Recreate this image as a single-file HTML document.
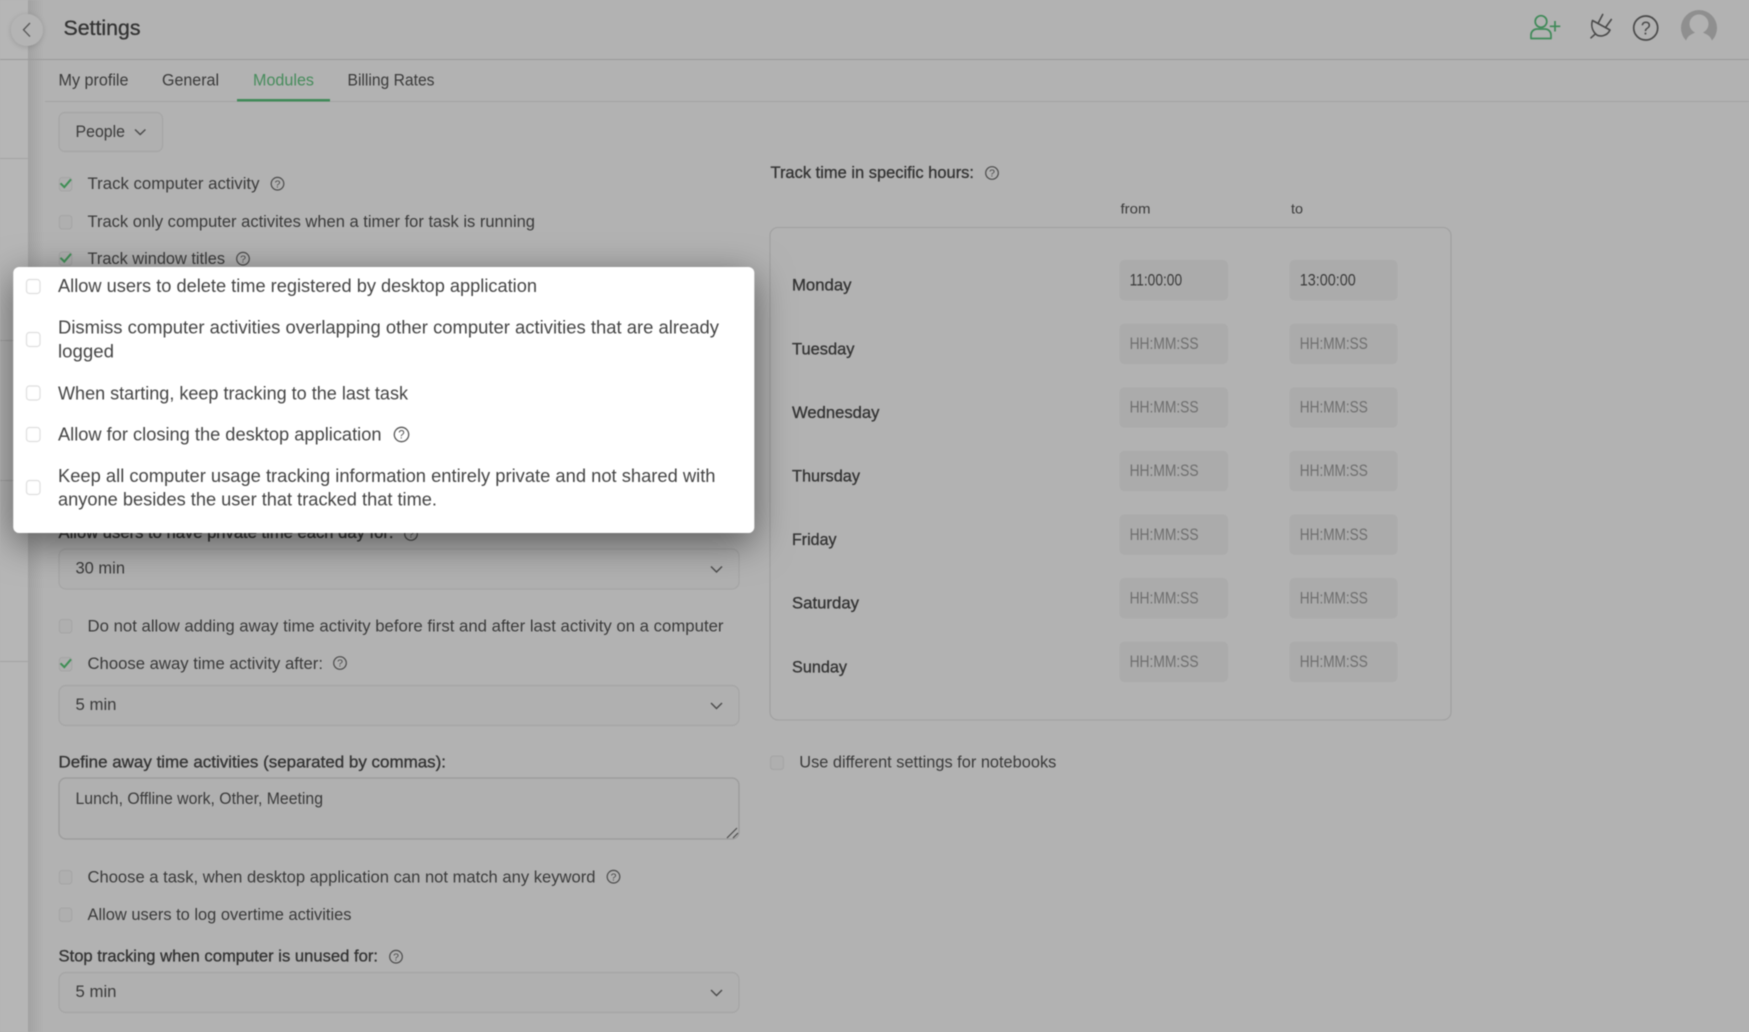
<!DOCTYPE html>
<html lang="en"><head><meta charset="utf-8"><title>Settings</title>
<style>
html,body{margin:0;padding:0;width:1749px;height:1032px;overflow:hidden;background:#b2b2b2}
svg{display:block;filter:blur(.45px)}
text{font-family:"Liberation Sans",Arial,sans-serif;font-size:16.5px;fill:#3a3a3a}
.m{stroke:#333;stroke-width:.3px;fill:#333}
.w{font-size:18px;fill:#454545}
.ph{fill:#6e6e6e;font-size:16.5px}
.cb{fill:#afafaf;stroke:#a4a4a4;stroke-width:1}
.wc{fill:#fff;stroke:#dedede;stroke-width:1.2}
.ck{fill:none;stroke:#3f8f55;stroke-width:2}
.sel{fill:#b0b0b0;stroke:#a5a5a5;stroke-width:1.2}
.inp{fill:#ababab}
.chev{fill:none;stroke:#4a4a4a;stroke-width:1.4}
.hc{fill:none;stroke:#4a4a4a;stroke-width:1.2}
.hq{font-size:10.5px;fill:#4a4a4a;text-anchor:middle}
.hqw{font-size:11.5px;fill:#555;text-anchor:middle}
</style></head>
<body>
<svg width="1749" height="1032" viewBox="0 0 1749 1032" xmlns="http://www.w3.org/2000/svg">
<defs>
<linearGradient id="sh" x1="0" x2="1" y1="0" y2="0"><stop offset="0" stop-color="#000" stop-opacity=".09"/><stop offset="1" stop-color="#000" stop-opacity="0"/></linearGradient>
<filter id="ms" x="-10%" y="-30%" width="120%" height="170%"><feDropShadow dx="0" dy="10" stdDeviation="19" flood-color="#000" flood-opacity=".5"/></filter>
<filter id="bs" x="-40%" y="-40%" width="180%" height="180%"><feDropShadow dx="0" dy="1" stdDeviation="3" flood-color="#000" flood-opacity=".16"/></filter>
</defs>
<rect width="1749" height="1032" fill="#b2b2b2"/>
<!-- left rail -->
<rect x="0" y="0" width="28" height="1032" fill="#b6b6b6"/>
<rect x="28" y="0" width="16" height="1032" fill="url(#sh)"/>
<rect x="0" y="158" width="28" height="1" fill="#a4a4a4"/>
<rect x="0" y="340" width="28" height="1" fill="#a4a4a4"/>
<rect x="0" y="480" width="28" height="1" fill="#a4a4a4"/>
<rect x="0" y="661" width="28" height="1" fill="#a4a4a4"/>
<!-- header -->
<rect x="0" y="59" width="1749" height="1" fill="#999"/>
<circle cx="27" cy="30" r="16" fill="#b4b4b4" filter="url(#bs)"/>
<path d="M30 23l-6.500 6.800 6.500 6.800" fill="none" stroke="#555" stroke-width="1.300"/>
<text x="63.500" y="35" style="font-size:21px" class="m" textLength="77" lengthAdjust="spacingAndGlyphs">Settings</text>
<!-- header icons -->
<g fill="none" stroke="#3f8a58" stroke-width="1.700">
<circle cx="1541" cy="21.500" r="5.800"/>
<path d="M1531 38.500v-3.500a6 6 0 0 1 6-6h8a6 6 0 0 1 6 6v3.500z" stroke-linejoin="round"/>
<path d="M1555 21v10.500M1549.800 26.300h10.500"/>
</g>
<g fill="none" stroke="#4a4a4a" stroke-width="1.600" stroke-linecap="round" stroke-linejoin="round">
<path d="M1592.500 20.500L1610 30C1607 36.500 1599 37.500 1595.500 33.800C1592 30 1591 25 1592.500 20.500z"/>
<path d="M1598 23.500l4.700-9M1605.500 27.500l5.800-8M1595.500 33.800l-4.500 4"/>
</g>
<circle cx="1645.700" cy="28" r="12" fill="none" stroke="#4a4a4a" stroke-width="1.700"/>
<text x="1645.700" y="34.500" text-anchor="middle" style="font-size:18px;fill:#4a4a4a" class="">?</text>
<path d="M1686 40.500a18 18 0 1 1 26 0l-1-2c-2-4-7-5-8-6a9.500 9.500 0 1 0-8 0c-1 1-6 2-8 6z" fill="#8f8f8f"/>
<!-- tabs -->
<rect x="45" y="101" width="1704" height="1" fill="#a3a3a3"/>
<rect x="237" y="99" width="93" height="2.500" fill="#3f8a58"/>
<text x="58.500" y="85.500" textLength="70" lengthAdjust="spacingAndGlyphs">My profile</text>
<text x="162" y="85.500" textLength="57" lengthAdjust="spacingAndGlyphs">General</text>
<text x="253" y="85.500" textLength="61" lengthAdjust="spacingAndGlyphs" style="fill:#478c5c">Modules</text>
<text x="347.500" y="85.500" textLength="87" lengthAdjust="spacingAndGlyphs">Billing Rates</text>
<!-- people -->
<rect x="59" y="112.500" width="103.500" height="39" rx="6" class="sel"/>
<text x="75.500" y="137" textLength="49.500" lengthAdjust="spacingAndGlyphs">People</text>
<path class="chev" d="M135 129.500l5.200 5 5.200-5"/>
<!-- left checks -->
<rect x="59.300" y="177.500" width="12.500" height="13.500" rx="3" class="cb"/><path class="ck" d="M60.500 183.300l3.800 3.800 6.700-7.800"/>
<text x="87.500" y="189" textLength="172" lengthAdjust="spacingAndGlyphs">Track computer activity</text>
<circle cx="277.500" cy="183.700" r="6.300" class="hc"/><text x="277.500" y="187.400" class="hq">?</text>
<rect x="59.300" y="215.500" width="12.500" height="13.500" rx="3" class="cb"/>
<text x="87.500" y="227" textLength="447.500" lengthAdjust="spacingAndGlyphs">Track only computer activites when a timer for task is running</text>
<rect x="59.300" y="252" width="12.500" height="13.500" rx="3" class="cb"/><path class="ck" d="M60.500 257.800l3.800 3.800 6.700-7.800"/>
<text x="87.500" y="264" textLength="137.500" lengthAdjust="spacingAndGlyphs">Track window titles</text>
<circle cx="243" cy="258.700" r="6.300" class="hc"/><text x="243" y="262.400" class="hq">?</text>
<!-- below modal (left) -->
<text x="58.500" y="538" class="m" textLength="335" lengthAdjust="spacingAndGlyphs">Allow users to have private time each day for:</text>
<circle cx="411" cy="534" r="6.300" class="hc"/><text x="411" y="537.700" class="hq">?</text>
<rect x="59" y="549" width="680" height="40" rx="7" class="sel"/>
<text x="75.500" y="573.500" textLength="49.500" lengthAdjust="spacingAndGlyphs">30 min</text>
<path class="chev" d="M711 566.500l5.500 5.500 5.500-5.500"/>
<rect x="59.300" y="619.500" width="12.500" height="13.500" rx="3" class="cb"/>
<text x="87.500" y="631.700" textLength="636" lengthAdjust="spacingAndGlyphs">Do not allow adding away time activity before first and after last activity on a computer</text>
<rect x="59.300" y="657.500" width="12.500" height="13.500" rx="3" class="cb"/><path class="ck" d="M60.500 663.300l3.800 3.800 6.700-7.800"/>
<text x="87.500" y="669" textLength="235.500" lengthAdjust="spacingAndGlyphs">Choose away time activity after:</text>
<circle cx="340" cy="663" r="6.300" class="hc"/><text x="340" y="666.700" class="hq">?</text>
<rect x="59" y="685.500" width="680" height="40" rx="7" class="sel"/>
<text x="75.500" y="710" textLength="41" lengthAdjust="spacingAndGlyphs">5 min</text>
<path class="chev" d="M711 703l5.500 5.500 5.500-5.500"/>
<text x="58.500" y="767.700" class="m" textLength="387.500" lengthAdjust="spacingAndGlyphs">Define away time activities (separated by commas):</text>
<rect x="59" y="778" width="680" height="61" rx="7" class="sel" style="stroke:#9a9a9a"/>
<text x="75.500" y="804" textLength="247.500" lengthAdjust="spacingAndGlyphs">Lunch, Offline work, Other, Meeting</text>
<path d="M727 838l10-10M733 838l5-5" fill="none" stroke="#444" stroke-width="1"/>
<rect x="59.300" y="870.500" width="12.500" height="13.500" rx="3" class="cb"/>
<text x="87.500" y="882.700" textLength="508" lengthAdjust="spacingAndGlyphs">Choose a task, when desktop application can not match any keyword</text>
<circle cx="613.500" cy="876.700" r="6.300" class="hc"/><text x="613.500" y="880.400" class="hq">?</text>
<rect x="59.300" y="908" width="12.500" height="13.500" rx="3" class="cb"/>
<text x="87.500" y="920" textLength="264" lengthAdjust="spacingAndGlyphs">Allow users to log overtime activities</text>
<text x="58.500" y="961.700" class="m" textLength="319.500" lengthAdjust="spacingAndGlyphs">Stop tracking when computer is unused for:</text>
<circle cx="396" cy="956.700" r="6.300" class="hc"/><text x="396" y="960.400" class="hq">?</text>
<rect x="59" y="972.500" width="680" height="40" rx="7" class="sel"/>
<text x="75.500" y="997" textLength="41" lengthAdjust="spacingAndGlyphs">5 min</text>
<path class="chev" d="M711 990l5.500 5.500 5.500-5.500"/>
<!-- right column -->
<text x="770.500" y="178" class="m" textLength="203.500" lengthAdjust="spacingAndGlyphs">Track time in specific hours:</text>
<circle cx="992" cy="173" r="6.300" class="hc"/><text x="992" y="176.700" class="hq">?</text>
<text x="1120.500" y="213.500" style="font-size:14px" textLength="30" lengthAdjust="spacingAndGlyphs">from</text>
<text x="1291" y="213.500" style="font-size:14px" textLength="12" lengthAdjust="spacingAndGlyphs">to</text>
<rect x="770" y="227.500" width="681" height="492.500" rx="8" fill="none" stroke="#9f9f9f" stroke-width="1.100"/>
<g>
<text x="792" y="290.700" class="m" textLength="59.500" lengthAdjust="spacingAndGlyphs">Monday</text>
<rect x="1119.500" y="260" width="108.500" height="40.500" rx="5" class="inp"/><rect x="1289.500" y="260" width="108" height="40.500" rx="5" class="inp"/>
<text x="1129.600" y="285.700" style="font-size:17px" textLength="52.500" lengthAdjust="spacingAndGlyphs">11:00:00</text>
<text x="1299.800" y="285.700" style="font-size:17px" textLength="56" lengthAdjust="spacingAndGlyphs">13:00:00</text>

<text x="792" y="354.300" class="m" textLength="62.500" lengthAdjust="spacingAndGlyphs">Tuesday</text>
<rect x="1119.500" y="323.600" width="108.500" height="40.500" rx="5" class="inp"/><rect x="1289.500" y="323.600" width="108" height="40.500" rx="5" class="inp"/>
<text x="1129.600" y="349" class="ph" textLength="69" lengthAdjust="spacingAndGlyphs">HH:MM:SS</text>
<text x="1299.800" y="349" class="ph" textLength="68" lengthAdjust="spacingAndGlyphs">HH:MM:SS</text>

<text x="792" y="417.900" class="m" textLength="87.500" lengthAdjust="spacingAndGlyphs">Wednesday</text>
<rect x="1119.500" y="387.200" width="108.500" height="40.500" rx="5" class="inp"/><rect x="1289.500" y="387.200" width="108" height="40.500" rx="5" class="inp"/>
<text x="1129.600" y="412.600" class="ph" textLength="69" lengthAdjust="spacingAndGlyphs">HH:MM:SS</text>
<text x="1299.800" y="412.600" class="ph" textLength="68" lengthAdjust="spacingAndGlyphs">HH:MM:SS</text>

<text x="792" y="481.500" class="m" textLength="68" lengthAdjust="spacingAndGlyphs">Thursday</text>
<rect x="1119.500" y="450.800" width="108.500" height="40.500" rx="5" class="inp"/><rect x="1289.500" y="450.800" width="108" height="40.500" rx="5" class="inp"/>
<text x="1129.600" y="476.200" class="ph" textLength="69" lengthAdjust="spacingAndGlyphs">HH:MM:SS</text>
<text x="1299.800" y="476.200" class="ph" textLength="68" lengthAdjust="spacingAndGlyphs">HH:MM:SS</text>

<text x="792" y="545.100" class="m" textLength="44.500" lengthAdjust="spacingAndGlyphs">Friday</text>
<rect x="1119.500" y="514.400" width="108.500" height="40.500" rx="5" class="inp"/><rect x="1289.500" y="514.400" width="108" height="40.500" rx="5" class="inp"/>
<text x="1129.600" y="539.800" class="ph" textLength="69" lengthAdjust="spacingAndGlyphs">HH:MM:SS</text>
<text x="1299.800" y="539.800" class="ph" textLength="68" lengthAdjust="spacingAndGlyphs">HH:MM:SS</text>

<text x="792" y="608.700" class="m" textLength="67" lengthAdjust="spacingAndGlyphs">Saturday</text>
<rect x="1119.500" y="578" width="108.500" height="40.500" rx="5" class="inp"/><rect x="1289.500" y="578" width="108" height="40.500" rx="5" class="inp"/>
<text x="1129.600" y="603.400" class="ph" textLength="69" lengthAdjust="spacingAndGlyphs">HH:MM:SS</text>
<text x="1299.800" y="603.400" class="ph" textLength="68" lengthAdjust="spacingAndGlyphs">HH:MM:SS</text>

<text x="792" y="672.300" class="m" textLength="55" lengthAdjust="spacingAndGlyphs">Sunday</text>
<rect x="1119.500" y="641.600" width="108.500" height="40.500" rx="5" class="inp"/><rect x="1289.500" y="641.600" width="108" height="40.500" rx="5" class="inp"/>
<text x="1129.600" y="667" class="ph" textLength="69" lengthAdjust="spacingAndGlyphs">HH:MM:SS</text>
<text x="1299.800" y="667" class="ph" textLength="68" lengthAdjust="spacingAndGlyphs">HH:MM:SS</text>
</g>
<rect x="770.500" y="756" width="13" height="13.500" rx="3" class="cb"/>
<text x="799.300" y="767.700" textLength="257" lengthAdjust="spacingAndGlyphs">Use different settings for notebooks</text>
<!-- modal -->
<rect x="13.300" y="267" width="741" height="266" rx="6" fill="#fff" filter="url(#ms)"/>
<rect x="26.500" y="279.500" width="13.500" height="14" rx="3" class="wc"/>
<text x="58" y="292" class="w" textLength="479" lengthAdjust="spacingAndGlyphs">Allow users to delete time registered by desktop application</text>
<rect x="26.500" y="332.500" width="13.500" height="14" rx="3" class="wc"/>
<text x="58" y="333.500" class="w" textLength="661" lengthAdjust="spacingAndGlyphs">Dismiss computer activities overlapping other computer activities that are already</text>
<text x="58" y="357.500" class="w" textLength="56" lengthAdjust="spacingAndGlyphs">logged</text>
<rect x="26.500" y="386" width="13.500" height="14" rx="3" class="wc"/>
<text x="58" y="399.300" class="w" textLength="350" lengthAdjust="spacingAndGlyphs">When starting, keep tracking to the last task</text>
<rect x="26.500" y="427.500" width="13.500" height="14" rx="3" class="wc"/>
<text x="58" y="440.300" class="w" textLength="323.500" lengthAdjust="spacingAndGlyphs">Allow for closing the desktop application</text>
<circle cx="401.500" cy="434.500" r="7.200" fill="none" stroke="#555" stroke-width="1.300"/><text x="401.500" y="438.600" class="hqw">?</text>
<rect x="26.500" y="480.500" width="13.500" height="14" rx="3" class="wc"/>
<text x="58" y="482" class="w" textLength="657.500" lengthAdjust="spacingAndGlyphs">Keep all computer usage tracking information entirely private and not shared with</text>
<text x="58" y="505.300" class="w" textLength="379" lengthAdjust="spacingAndGlyphs">anyone besides the user that tracked that time.</text>
</svg>
</body></html>
